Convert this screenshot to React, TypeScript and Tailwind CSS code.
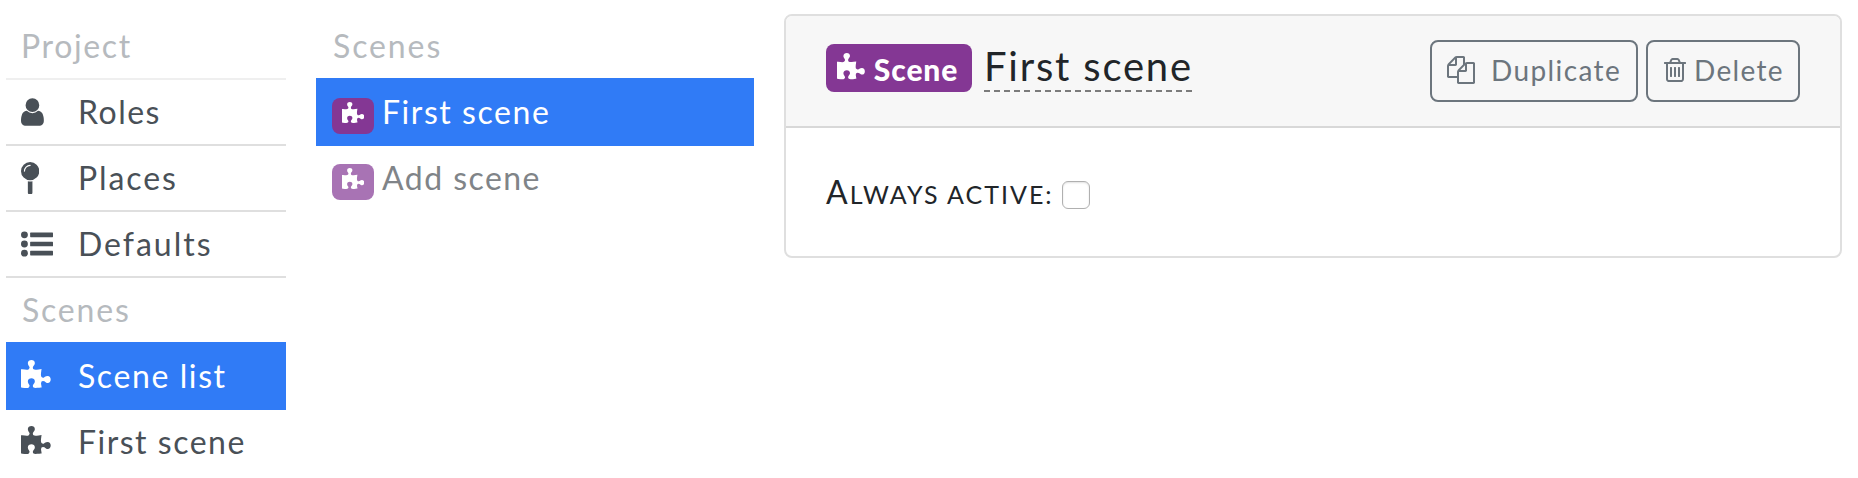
import React from "react";

type IconProps = { className?: string };
const puzzle =
  "M1664 1098q0 81-44.5 135t-123.5 54q-41 0-77.5-17.5t-59-38-56.5-38-71-17.5q-110 0-110 124 0 39 16 115t15 115v5q-22 0-33 1-34 3-97.5 11.5t-115.5 13.5-98 5q-61 0-103-26.5t-42-83.5q0-37 17.5-71t38-56.5 38-59 17.5-77.5q0-79-54-123.5t-135-44.5q-84 0-143 45.5t-59 127.5q0 43 15 83t33.5 64.5 33.5 53 15 50.5q0 45-46 89-37 35-117 35-95 0-245-24-9-2-27.5-4t-27.5-4l-13-2q-1 0-3-1-2 0-2-1v-1024q2 1 17.5 3.5t34 5 21.5 3.5q150 24 245 24 80 0 117-35 46-44 46-89 0-22-15-50.5t-33.5-53-33.5-64.5-15-83q0-82 59-127.5t144-45.5q80 0 134 44.5t54 123.5q0 41-17.5 77.5t-38 59-38 56.5-17.5 71q0 57 42 83.5t103 26.5q64 0 180-15t163-17v2q-1 2-3.5 17.5t-5 34-3.5 21.5q-24 150-24 245 0 80 35 117 44 46 89 46 22 0 50.5-15t53-33.5 64.5-33.5 83-15q82 0 127.5 59t45.5 143z";

const Puzzle = ({ className }: IconProps) => (
  <svg viewBox="0 0 1664 1792" fill="currentColor" className={className}><path d={puzzle} /></svg>
);
const User = ({ className }: IconProps) => (
  <svg viewBox="0 0 1280 1792" fill="currentColor" className={className}>
    <path d="M1280 1399q0 109-62.5 187t-150.5 78h-854q-88 0-150.5-78t-62.5-187q0-85 8.5-160.5t31.5-152 58.5-131 94-89 134.5-34.5q131 128 313 128t313-128q76 0 134.5 34.5t94 89 58.5 131 31.5 152 8.5 160.5zm-256-887q0 159-112.5 271.5t-271.5 112.5-271.5-112.5-112.5-271.5 112.5-271.5 271.5-112.5 271.5 112.5 112.5 271.5z" />
  </svg>
);
const Pin = ({ className }: IconProps) => (
  <svg viewBox="0 0 1024 1792" fill="currentColor" className={className}>
    <path d="M512 1088q66 0 128-15v655q0 26-19 45t-45 19h-128q-26 0-45-19t-19-45v-655q62 15 128 15zm0-1088q212 0 362 150t150 362-150 362-362 150-362-150-150-362 150-362 362-150zm0 224q14 0 23-9t9-23-9-23-23-9q-146 0-249 103t-103 249q0 14 9 23t23 9 23-9 9-23q0-119 84.5-203.5t203.5-84.5z" />
  </svg>
);
const List = ({ className }: IconProps) => (
  <svg viewBox="0 0 1792 1792" fill="currentColor" className={className}>
    <circle cx="192" cy="384" r="192" /><circle cx="192" cy="896" r="192" /><circle cx="192" cy="1408" r="192" />
    <rect x="512" y="256" width="1280" height="256" rx="32" />
    <rect x="512" y="768" width="1280" height="256" rx="32" />
    <rect x="512" y="1280" width="1280" height="256" rx="32" />
  </svg>
);
const Copy = ({ className }: IconProps) => (
  <svg viewBox="0 0 1792 1792" fill="currentColor" className={className}>
    <path d="M1696 384q40 0 68 28t28 68v1216q0 40-28 68t-68 28h-960q-40 0-68-28t-28-68v-288h-544q-40 0-68-28t-28-68v-672q0-40 20-88t48-76l408-408q28-28 76-48t88-20h416q40 0 68 28t28 68v328q68-40 128-40h416zm-544 213l-299 299h299v-299zm-640-384l-299 299h299v-299zm196 647l316-316v-416h-384v416q0 40-28 68t-68 28h-416v640h512v-256q0-40 20-88t48-76zm956 804v-1152h-384v416q0 40-28 68t-68 28h-416v640h896z" />
  </svg>
);
const Trash = ({ className }: IconProps) => (
  <svg viewBox="0 0 1408 1792" fill="currentColor" className={className}>
    <path d="M512 736v576q0 14-9 23t-23 9h-64q-14 0-23-9t-9-23v-576q0-14 9-23t23-9h64q14 0 23 9t9 23zm256 0v576q0 14-9 23t-23 9h-64q-14 0-23-9t-9-23v-576q0-14 9-23t23-9h64q14 0 23 9t9 23zm256 0v576q0 14-9 23t-23 9h-64q-14 0-23-9t-9-23v-576q0-14 9-23t23-9h64q14 0 23 9t9 23zm128 724v-948h-896v948q0 22 7 40.5t14.5 27 10.5 8.5h832q3 0 10.5-8.5t14.5-27 7-40.5zm-672-1076h448l-48-117q-7-9-17-11h-317q-10 2-17 11zm928 32v64q0 14-9 23t-23 9h-96v948q0 83-47 143.5t-113 60.5h-832q-66 0-113-58.5t-47-141.5v-952h-96q-14 0-23-9t-9-23v-64q0-14 9-23t23-9h309l70-167q15-37 54-63t79-26h320q40 0 79 26t54 63l70 167h309q14 0 23 9t9 23z" />
  </svg>
);

type NavItemProps = { icon: React.ReactNode; label: string; spacing: string; row?: string };

function NavItem({ icon, label, spacing, row = "h-[66px] border-b-2 border-[#dfdfdf] text-[#495057]" }: NavItemProps) {
  return (
    <a className={`flex items-center pl-[15px] ${row}`}>
      <span className="flex w-[57px] items-center">{icon}</span>
      <span className={`whitespace-nowrap ${spacing}`}>{label}</span>
    </a>
  );
}

export default function App() {
  return (
    <div className="flex h-[478px] w-[1858px] items-start overflow-hidden bg-white font-['Lato',sans-serif] text-[32px] leading-[48px] text-[#212529]">
      <nav className="ml-[6px] w-[280px] shrink-0 pt-[14px]">
        <h2 className="flex h-[66px] items-center border-b-2 border-[#efefef] pl-[15px] tracking-[1.65px] text-[#b6babe]">Project</h2>
        <NavItem label="Roles" spacing="tracking-[1.5px]" icon={<User className="h-8" />} />
        <NavItem label="Places" spacing="tracking-[1.9px]" icon={<Pin className="h-8" />} />
        <NavItem label="Defaults" spacing="tracking-[2px]" icon={<List className="h-8" />} />
        <h2 className="flex h-[64px] items-center pl-4 tracking-[1.8px] text-[#b6babe]">Scenes</h2>
        <NavItem label="Scene list" spacing="tracking-[1.6px]" row="h-[68px] bg-[#307bf6] text-white" icon={<Puzzle className="h-8" />} />
        <NavItem label="First scene" spacing="tracking-[1.5px]" row="h-[64px] text-[#495057]" icon={<Puzzle className="h-8" />} />
      </nav>

      <section className="ml-[30px] w-[438px] shrink-0 pt-[14px]">
        <h2 className="flex h-[64px] items-center pl-[17px] tracking-[1.9px] text-[#b6babe]">Scenes</h2>
        <a className="flex h-[68px] items-center bg-[#307bf6] pl-4 text-white">
          <span className="mt-2 flex h-9 w-[42px] items-center justify-center rounded-lg bg-[#843794] pb-1"><Puzzle className="h-6" /></span>
          <span className="ml-2 tracking-[1.55px]">First scene</span>
        </a>
        <a className="flex h-[64px] items-center pl-4 text-[#808488]">
          <span className="mt-2 flex h-9 w-[42px] items-center justify-center rounded-lg bg-[#a873b4] pb-1 text-white"><Puzzle className="h-6" /></span>
          <span className="ml-2 tracking-[1.45px]">Add scene</span>
        </a>
      </section>

      <main className="ml-[30px] mt-[14px] h-[244px] w-[1058px] shrink-0 overflow-hidden rounded-lg border-2 border-[#dfdfdf]">
        <header className="flex h-[112px] items-start border-b-2 border-[#d8d8d8] bg-[#f7f7f7] pl-10 pr-10">
          <span className="mt-7 flex h-12 w-[146px] items-center rounded-lg bg-[#843794] pl-[11px] text-white">
            <Puzzle className="h-[30px]" />
            <strong className="ml-[9px] mt-px text-[30px] font-black leading-none tracking-[0.9px]">Scene</strong>
          </span>
          <div className="ml-3 mt-5 flex h-14 w-[208px] flex-col justify-between pt-[6px]">
            <h1 className="whitespace-nowrap text-[40px] tracking-[1.8px]">First scene</h1>
            <div className="h-0.5 bg-[repeating-linear-gradient(90deg,#7b7b7b_0_6px,transparent_6px_10.1px)]" />
          </div>
          <div className="ml-auto mt-6 flex gap-2 text-[28px] text-[#6c757d]">
            <button className="flex h-[62px] w-[208px] items-center rounded-lg border-2 border-[#6c757d] pb-0.5 pl-[15px]">
              <Copy className="h-7" /><span className="ml-4 tracking-[1.4px]">Duplicate</span>
            </button>
            <button className="flex h-[62px] w-[154px] items-center rounded-lg border-2 border-[#6c757d] pb-0.5 pl-4">
              <Trash className="h-7" /><span className="ml-2 tracking-[1.3px]">Delete</span>
            </button>
          </div>
        </header>
        <div className="flex h-[128px] items-center pl-10">
          <label className="mt-0.5 block w-[228px] whitespace-nowrap text-[25px] uppercase tracking-[2px] first-letter:text-[32px]">Always active:</label>
          <span className="ml-2 mt-1.5 size-7 rounded-md border border-[#b0b0b0] bg-white shadow-[inset_0_1px_2px_rgba(0,0,0,0.12)]" />
        </div>
      </main>
    </div>
  );
}
